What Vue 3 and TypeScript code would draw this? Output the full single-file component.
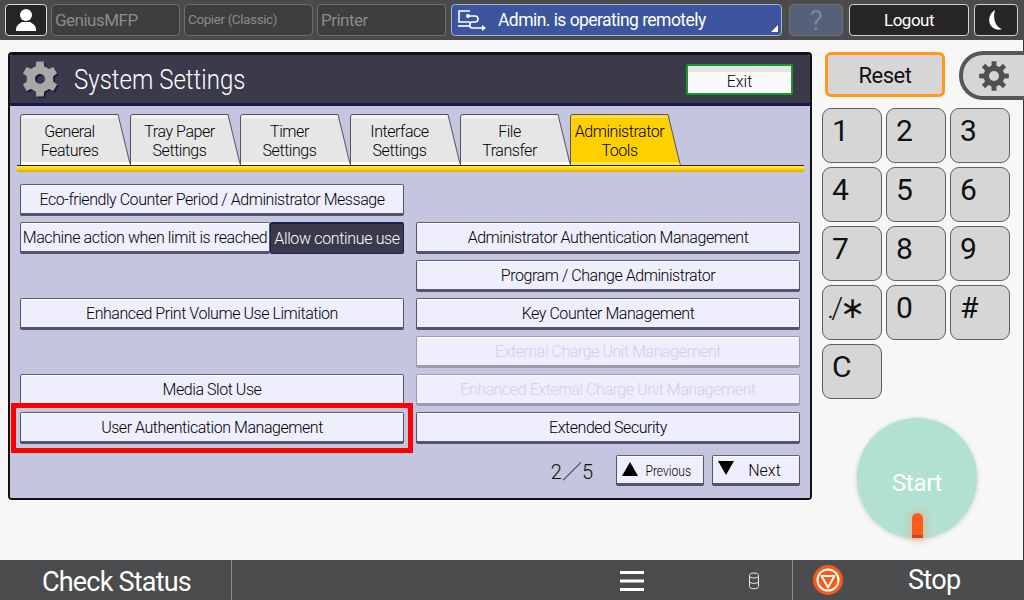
<script setup lang="ts">
function gear(cx: number, cy: number, ro: number, ri: number, hole: number, teeth: number): string {
  const pts: string[] = [];
  const step = (Math.PI * 2) / teeth;
  for (let i = 0; i < teeth; i++) {
    const a = -Math.PI / 2 + i * step;
    const w = step * 0.2;
    const w2 = step * 0.3;
    const p = (r: number, t: number) => `${(cx + r * Math.cos(t)).toFixed(2)} ${(cy + r * Math.sin(t)).toFixed(2)}`;
    pts.push(p(ri, a - w2), p(ro, a - w), p(ro, a + w), p(ri, a + w2));
  }
  const d = `M${pts.join('L')}Z`;
  return `${d}M${cx - hole} ${cy}a${hole} ${hole} 0 1 0 ${hole * 2} 0a${hole} ${hole} 0 1 0 ${-hole * 2} 0Z`;
}
const headerGear = gear(19, 19, 18, 13.5, 5, 6);
const sideGear = gear(15, 15, 15, 10.5, 5, 8);

const tabs = [
  ['General', 'Features'],
  ['Tray Paper', 'Settings'],
  ['Timer', 'Settings'],
  ['Interface', 'Settings'],
  ['File', 'Transfer'],
  ['Administrator', 'Tools'],
];
const keys = ['1', '2', '3', '4', '5', '6', '7', '8', '9', './∗', '0', '#', 'C'];
</script>

<template>
  <div class="screen">
    <header class="topbar">
      <button class="tb tb-user">
        <svg width="24" height="24" viewBox="0 0 24 24"><circle cx="12" cy="7" r="6" fill="#fff" /><path d="M2 23c-1-5 4-8 6-9h8c2 1 7 4 6 9z" fill="#fff" /></svg>
      </button>
      <button class="tb tb-func t1">GeniusMFP</button>
      <button class="tb tb-func t2">Copier (Classic)</button>
      <button class="tb tb-func t1">Printer</button>
      <button class="tb tb-remote">
        <svg width="30" height="24" viewBox="0 0 30 24" fill="none" stroke="#fff" stroke-width="1.6">
          <path d="M13 3H2v11h11" />
          <path d="M1 18h13" />
          <circle cx="11" cy="8" r="2" fill="#fff" stroke="none" />
          <path d="M11 8h7c4 0 4 6 0 6h-3c-3 0-3 6 0 6h11" />
          <path d="M25 17l4 3-4 3z" fill="#fff" stroke="none" />
        </svg>
        <span class="remote-text">Admin. is operating remotely</span>
        <i class="corner"></i>
      </button>
      <button class="tb tb-help">?</button>
      <button class="tb tb-logout">Logout</button>
      <button class="tb tb-moon">
        <svg width="16" height="22" viewBox="0 0 16 22"><path d="M7 1C2 4 0 10 2 15c2 4 7 7 12 5C9 19 4 11 7 1z" fill="#fff" /></svg>
      </button>
    </header>

    <main class="main">
      <section class="panel">
        <div class="panel-head">
          <svg class="head-gear" width="40" height="40" viewBox="0 0 40 40">
            <path :d="headerGear" fill="#14183f" fill-rule="evenodd" transform="translate(1.5 1.5)" />
            <path :d="headerGear" fill="#a8a8a8" fill-rule="evenodd" />
          </svg>
          <h1 class="title"><span class="title-text">System Settings</span></h1>
          <button class="exit">Exit</button>
        </div>
        <div class="panel-body">
          <div class="tabs">
            <div v-for="(t, i) in tabs" :key="i" class="tab" :class="{ active: i === 5 }">
              <svg class="tab-bg" width="112" height="52" viewBox="0 0 112 52">
                <path d="M.5 52V3Q.5.5 3 .5h95L110.500 52z" :fill="i === 5 ? '#ffd000' : '#e6e6e6'" stroke="#55555f" />
                <path d="M1.500 4V3Q1.500 1.500 3 1.500h94L98 4z" :fill="i === 5 ? '#ffe24a' : '#f4f4f4'" />
                <path d="M1 48h108l1 3.500H1z" :fill="i === 5 ? '#ffe24a' : '#fff'" />
              </svg>
              <span class="tab-label">{{ t[0] }}<br />{{ t[1] }}</span>
            </div>
          </div>
          <div class="tab-rule"></div>
          <div class="grid">
            <button class="btn">Eco-friendly Counter Period / Administrator Message</button>
            <div></div>
            <div class="split">
              <button class="btn split-l">Machine action when limit is reached</button>
              <button class="split-r">Allow continue use</button>
            </div>
            <button class="btn">Administrator Authentication Management</button>
            <div></div>
            <button class="btn">Program / Change Administrator</button>
            <button class="btn">Enhanced Print Volume Use Limitation</button>
            <button class="btn">Key Counter Management</button>
            <div></div>
            <button class="btn off">External Charge Unit Management</button>
            <button class="btn">Media Slot Use</button>
            <button class="btn off">Enhanced External Charge Unit Management</button>
            <button class="btn marked">User Authentication Management</button>
            <button class="btn">Extended Security</button>
          </div>
          <div class="pager">
            <span class="count">2／5</span>
            <button class="btn page prev"><i class="up"></i><span class="page-label"><span class="prev-text">Previous</span></span></button>
            <button class="btn page next"><i class="down"></i><span class="page-label">Next</span></button>
          </div>
        </div>
      </section>

      <aside class="side">
        <div class="side-top">
          <button class="reset">Reset</button>
          <button class="pill">
            <svg width="30" height="30" viewBox="0 0 30 30"><path :d="sideGear" fill="#505050" fill-rule="evenodd" /></svg>
          </button>
        </div>
        <div class="keypad">
          <button v-for="k in keys" :key="k" class="key" :class="{ star: k.length > 1 }">{{ k }}</button>
        </div>
        <button class="start">
          <span class="start-text">Start</span>
          <i class="lamp"></i>
        </button>
      </aside>
    </main>

    <footer class="bottombar">
      <div class="check">Check Status</div>
      <div class="mid">
        <svg class="burger" width="24" height="20" viewBox="0 0 24 20" fill="#fff"><path d="M0 0h24v3H0zM0 8.500h24v3H0zM0 17h24v3H0z" /></svg>
        <svg class="db" width="12" height="18" viewBox="0 0 12 18" fill="none" stroke="#e8e8e8" stroke-width="1">
          <ellipse cx="6" cy="3.500" rx="4.500" ry="2.500" />
          <path d="M1.500 3.500v11c0 3 9 3 9 0v-11M1.500 9.500c0 2.500 9 2.500 9 0" />
        </svg>
      </div>
      <div class="stop">
        <svg width="30" height="30" viewBox="0 0 30 30">
          <circle cx="15" cy="15" r="15" fill="#fb5a16" />
          <circle cx="15" cy="15" r="10.500" fill="none" stroke="#fff" stroke-width="2" />
          <path d="M8.500 11h13L15 22.500z" fill="none" stroke="#fff" stroke-width="2" stroke-linejoin="round" />
        </svg>
        <span class="stop-text">Stop</span>
      </div>
    </footer>
  </div>
</template>

<style>
html, body { margin: 0; background: #f7f7f7; overflow: hidden; }
</style>

<style scoped>
.screen {
  width: 1024px;
  height: 600px;
  display: flex;
  flex-direction: column;
  background: #f7f7f7;
  font-family: Roboto, "Noto Sans", "Noto Sans CJK JP", sans-serif;
  font-weight: 300;
  overflow: hidden;
}
button {
  font-family: inherit;
  font-weight: inherit;
  padding: 0;
  margin: 0;
  box-sizing: border-box;
  display: block;
}
.topbar {
  height: 40px;
  flex: none;
  box-sizing: border-box;
  background: #4b4b4b;
  display: flex;
  align-items: center;
  padding-left: 5px;
}
.tb {
  height: 32px;
  border-radius: 4px;
  border: 1px solid #6e6e6e;
  flex: none;
  display: flex;
  align-items: center;
}
.tb-user {
  width: 42px;
  margin-right: 4px;
  background: #252525;
  border-color: #dcdcdc;
  justify-content: center;
}
.tb-func {
  width: 129px;
  margin-right: 4px;
  background: #3e3e3e;
  color: #8b8b8b;
  padding-left: 3px;
  line-height: 1;
  font-weight: 400;
}
.t1 { font-size: 17px; letter-spacing: -0.5px; }
.t2 { font-size: 13.500px; letter-spacing: -0.4px; }
.tb-remote {
  width: 331px;
  margin-left: 1px;
  margin-right: 7px;
  background: #3c559e;
  border-color: #a9b4d3;
  color: #fff;
  padding-left: 5px;
  position: relative;
}
.remote-text { font-size: 17.500px; margin-left: 11px; font-weight: 400; letter-spacing: -0.55px; }
.corner {
  position: absolute;
  right: 3px;
  bottom: 3px;
  width: 0;
  height: 0;
  border-left: 7px solid transparent;
  border-bottom: 7px solid #fff;
}
.tb-help {
  width: 54px;
  margin-right: 6px;
  background: #566179;
  color: #7f8794;
  font-size: 28px;
  font-weight: 400;
  justify-content: center;
}
.tb-logout {
  width: 120px;
  margin-right: 5px;
  background: #252525;
  border-color: #d0d0d0;
  color: #fff;
  font-size: 17px;
  font-weight: 400;
  letter-spacing: -0.5px;
  justify-content: center;
}
.tb-moon {
  width: 44px;
  background: #252525;
  border-color: #d0d0d0;
  justify-content: center;
}

.main {
  flex: 1;
  display: flex;
  align-items: flex-start;
  border-right: 1px solid #333;
  min-height: 0;
}
.panel {
  width: 804px;
  height: 448px;
  margin: 12px 0 0 8px;
  box-sizing: border-box;
  border: 2px solid #111;
  border-top-width: 3px;
  border-radius: 4px;
  display: flex;
  flex-direction: column;
  flex: none;
  overflow: hidden;
}
.panel-head {
  height: 51px;
  flex: none;
  box-sizing: border-box;
  background: #3b3a4b;
  border-bottom: 3px solid #131a4d;
  display: flex;
  align-items: center;
  padding: 0 17px 0 11px;
  color: #fff;
}
.head-gear { flex: none; margin-top: 2px; }
.title {
  margin: 2px 0 0 13px;
  font-weight: 300;
  font-size: 27px;
  flex: 1;
  line-height: 32px;
}
.title-text {
  display: inline-block;
  transform: scaleX(0.89);
  transform-origin: left center;
  white-space: nowrap;
}
.exit {
  width: 107px;
  height: 31px;
  background: linear-gradient(#e4e4e4 0 6px, #fafafa 6px);
  border: 2px solid #139a2a;
  border-radius: 2px;
  color: #000;
  font-size: 16px;
  padding-top: 4px;
  margin-top: 1px;
}
.panel-body {
  flex: 1;
  background: #c4c5de;
  padding: 8px 0 0 10px;
  display: flex;
  flex-direction: column;
}
.tabs {
  display: flex;
  height: 51px;
  flex: none;
}
.tab {
  width: 110px;
  height: 51px;
  position: relative;
  flex: none;
  display: flex;
  justify-content: flex-start;
  color: #000;
}
.tab-bg { position: absolute; left: 0; top: 0; }
.tab-label {
  position: relative;
  width: 99px;
  text-align: center;
  font-size: 16px;
  letter-spacing: -0.45px;
  line-height: 19px;
  padding-top: 8px;
  white-space: nowrap;
}
.tab-rule {
  width: 787px;
  height: 7px;
  margin-left: -3px;
  box-sizing: border-box;
  border-top: 1px solid #222;
  background: linear-gradient(#ffee66, #ffd000 50%, #d9a900);
  position: relative;
  flex: none;
}
.grid {
  margin-top: 12px;
  width: 780px;
  display: grid;
  grid-template-columns: 384px 384px;
  grid-auto-rows: 32px;
  column-gap: 12px;
  row-gap: 6px;
  flex: none;
}
.btn {
  width: 100%;
  height: 32px;
  background: #eeeefc;
  border: 1px solid #55556a;
  border-top-color: #5f5f72;
  border-bottom: 3px solid #55556a;
  border-radius: 2px;
  box-shadow: inset 0 1px 0 #fff;
  color: #000;
  font-size: 16px;
  letter-spacing: -0.45px;
  text-align: center;
  white-space: nowrap;
  overflow: hidden;
}
.off {
  color: #d2d2dc;
  border-color: #9c9cab;
  border-bottom-color: #9c9cab;
}
.marked { position: relative; overflow: visible; }
.marked::after {
  content: "";
  position: absolute;
  inset: -10px -10px -12px -10px;
  border: 5px solid #ff0000;
  pointer-events: none;
}
.split { display: flex; }
.split-l { width: 250px; flex: none; letter-spacing: -0.4px; }
.split-r {
  width: 134px;
  flex: none;
  height: 32px;
  background: #3b3a4b;
  border: 1px solid #1a2050;
  border-top-width: 2px;
  border-radius: 2px;
  color: #fff;
  font-size: 16px;
  letter-spacing: -0.35px;
  white-space: nowrap;
}
.pager {
  margin-top: 11px;
  width: 780px;
  display: flex;
  justify-content: flex-end;
  align-items: center;
  flex: none;
}
.count { font-size: 20px; margin-right: 23px; color: #111; }
.page {
  width: 88px;
  height: 31px;
  display: flex;
  align-items: center;
  position: relative;
  padding-top: 2px;
}
.page.next { margin-left: 8px; }
.up, .down {
  width: 0;
  height: 0;
  margin-left: 5px;
  flex: none;
  border-left: 8px solid transparent;
  border-right: 8px solid transparent;
}
.up { border-bottom: 14px solid #000; margin-top: -3px; }
.down { border-top: 14px solid #000; margin-top: -6px; }
.page-label { flex: 1; text-align: center; font-size: 16px; letter-spacing: 0; padding-right: 4px; }
.prev-text {
  display: inline-block;
  font-size: 15.500px;
  transform: scaleX(0.78);
  transform-origin: center;
}

.side {
  width: 201px;
  flex: none;
  margin-left: 10px;
  display: flex;
  flex-direction: column;
}
.side-top {
  display: flex;
  align-items: flex-start;
  margin-top: 11px;
  height: 57px;
}
.reset {
  width: 120px;
  height: 45px;
  margin: 1px 0 0 3px;
  background: #d6d6d6;
  border: 3px solid #ff9a18;
  border-radius: 6px;
  color: #111;
  font-size: 22px;
  font-weight: 400;
  letter-spacing: -0.5px;
  flex: none;
  padding-top: 1px;
}
.pill {
  width: 65px;
  height: 49px;
  margin-left: 14px;
  background: #d6d6d6;
  border: 4px solid #565656;
  border-right: none;
  border-radius: 24px 0 0 24px;
  display: flex;
  align-items: center;
  justify-content: center;
  flex: none;
}
.keypad {
  display: grid;
  grid-template-columns: repeat(3, 60px);
  grid-auto-rows: 55px;
  column-gap: 4px;
  row-gap: 4px;
}
.key {
  width: 60px;
  height: 55px;
  background: #d6d6d6;
  border: 1px solid #5e5e5e;
  border-radius: 9px;
  color: #111;
  font-size: 30px;
  line-height: 30px;
  padding: 7px 0 0 9px;
  display: flex;
  align-items: flex-start;
  justify-content: flex-start;
  white-space: nowrap;
  font-weight: 400;
}
.key.star {
  padding-left: 4px;
  letter-spacing: -3px;
  font-weight: 300;
}
.start {
  width: 120px;
  height: 120px;
  margin: 19px 0 0 35px;
  border: none;
  border-radius: 50%;
  background: #b2e1d4;
  box-shadow: 0 1px 4px rgba(90, 120, 110, 0.35);
  color: #fff;
  position: relative;
  display: flex;
  align-items: center;
  justify-content: center;
  flex: none;
}
.start-text { font-size: 24px; font-weight: 400; position: relative; top: 5px; letter-spacing: -0.3px; }
.lamp {
  position: absolute;
  left: 55px;
  top: 95px;
  width: 11px;
  height: 25px;
  background: linear-gradient(#ff5a1e 88%, #c9481c 88%);
  border-radius: 6px 6px 0 0;
  box-shadow: 0 0 8px 3px rgba(255, 150, 110, 0.4);
}

.bottombar {
  height: 40px;
  flex: none;
  background: #4b4c4e;
  color: #fff;
  display: flex;
}
.check {
  width: 231px;
  flex: none;
  box-sizing: border-box;
  padding-left: 42px;
  font-size: 27px;
  font-weight: 400;
  letter-spacing: -0.8px;
  line-height: 44px;
  white-space: nowrap;
}
.mid {
  width: 562px;
  flex: none;
  box-sizing: border-box;
  border-left: 1px solid #8a8a8a;
  border-right: 1px solid #8a8a8a;
  display: flex;
  align-items: center;
  padding-left: 388px;
}
.burger { margin-top: 2px; }
.db { margin-left: 104px; margin-top: 1px; }
.stop {
  flex: 1;
  display: flex;
  align-items: center;
  padding-left: 20px;
}
.stop-text { font-size: 27px; font-weight: 400; margin-left: 65px; line-height: 44px; letter-spacing: -0.7px; }
</style>
